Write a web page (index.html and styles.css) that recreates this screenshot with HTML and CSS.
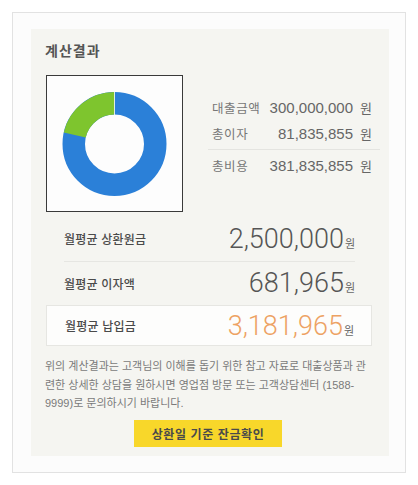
FILE: index.html
```html
<!DOCTYPE html>
<html lang="ko">
<head>
<meta charset="utf-8">
<link rel="stylesheet" href="styles.css">
</head>
<body>
<div class="outer">
  <div class="panel">
    <h2 class="title">계산결과</h2>
    <div class="top">
      <div class="chart">
        <svg width="135" height="135" viewBox="0 0 135 135">
          <circle cx="67.5" cy="68" r="40.75" fill="none" stroke="#2b80d8" stroke-width="22.5"/>
          <circle cx="67.5" cy="68" r="40.75" fill="none" stroke="#7ec52e" stroke-width="22.5" stroke-dasharray="54.88 300" transform="rotate(-167.1 67.5 68)"/>
          <line x1="67.5" y1="15" x2="67.5" y2="39" stroke="#ffffff" stroke-width="0.8"/>
        </svg>
      </div>
      <div class="info">
        <div class="irow"><span class="ilabel">대출금액</span><span class="ival">300,000,000</span><span class="iunit">원</span></div>
        <div class="irow sep"><span class="ilabel">총이자</span><span class="ival">81,835,855</span><span class="iunit">원</span></div>
        <div class="irow last"><span class="ilabel">총비용</span><span class="ival">381,835,855</span><span class="iunit">원</span></div>
      </div>
    </div>
    <div class="monthly">
      <div class="mrow first"><span class="mlabel">월평균 상환원금</span><span class="amount"><span class="mval">2,500,000</span><span class="munit">원</span></span></div>
      <div class="mrow second"><span class="mlabel">월평균 이자액</span><span class="amount"><span class="mval">681,965</span><span class="munit">원</span></span></div>
      <div class="mrow total"><span class="mlabel">월평균 납입금</span><span class="amount"><span class="mval orange">3,181,965</span><span class="munit">원</span></span></div>
    </div>
    <p class="note">위의 계산결과는 고객님의 이해를 돕기 위한 참고 자료로 대출상품과 관련한 상세한 상담을 원하시면 영업점 방문 또는 고객상담센터 (1588-<wbr>9999)로 문의하시기 바랍니다.</p>
    <div class="btnwrap"><button class="btn" type="button">상환일 기준 잔금확인</button></div>
  </div>
</div>
</body>
</html>
```
FILE: styles.css
```css
html, body {
  margin: 0;
  padding: 0;
  background: #ffffff;
}
body {
  font-family: "Liberation Sans", "Noto Sans CJK KR", sans-serif;
  color: #666;
}
.outer {
  margin: 12px 0 0 12px;
  width: 394px;
  height: 461px;
  box-sizing: border-box;
  border: 1px solid #e2e2e2;
  background: #fcfcfc;
  padding: 16px 16px 15px 18px;
}
.panel {
  background: #f5f5f1;
  height: 427px;
  box-sizing: border-box;
  padding: 12px 17px 0 15px;
}
.title {
  margin: 0 0 0 -1px;
  font-family: "Noto Sans CJK KR", sans-serif;
  font-size: 14px;
  font-weight: bold;
  letter-spacing: 1px;
  line-height: 18px;
  color: #555;
}
.top {
  display: flex;
  margin-top: 16px;
}
.chart {
  flex-shrink: 0;
  width: 137px;
  height: 137px;
  box-sizing: border-box;
  border: 1px solid #3a3a3a;
  background: #fdfdfd;
}
.chart svg {
  display: block;
}
.info {
  flex-shrink: 0;
  margin-left: 25px;
  margin-top: 20px;
  width: 176px;
  box-sizing: border-box;
  padding-right: 12px;
}
.irow {
  display: flex;
  align-items: baseline;
  height: 26px;
  line-height: 26px;
  padding-left: 4px;
  white-space: nowrap;
}
.irow.sep {
  padding-bottom: 2px;
  border-bottom: 1px solid #e4e4e0;
  margin-right: -8px;
  padding-right: 8px;
}
.irow.last {
  padding-top: 3px;
}
.ilabel {
  flex-shrink: 0;
  font-family: "Noto Sans CJK KR", sans-serif;
  font-size: 12.5px;
  letter-spacing: 0.6px;
  color: #777;
}
.ival {
  flex: 1 0 auto;
  text-align: right;
  font-size: 15px;
  color: #666;
}
.iunit {
  flex-shrink: 0;
  margin-left: 7px;
  font-family: "Noto Sans CJK KR", sans-serif;
  font-size: 13px;
  color: #666;
}
.monthly {
  display: flex;
  flex-direction: column;
}
.mrow {
  display: flex;
  align-items: center;
  justify-content: space-between;
  box-sizing: border-box;
  padding: 0 17px 0 18px;
}
.mrow.first,
.mrow.second {
  margin: 0 17px 0 18px;
  padding: 0;
}
.mrow.first {
  height: 50px;
  padding-top: 4px;
  border-bottom: 1px solid #e6e6e2;
}
.mrow.second {
  height: 42px;
}
.mrow.total {
  margin-top: 1px;
  height: 41px;
  border: 1px solid #e6e6e2;
  background: #fdfdfc;
}
.mlabel {
  font-family: "Noto Sans CJK KR", sans-serif;
  font-size: 12px;
  font-weight: 500;
  letter-spacing: 0.2px;
  color: #4a4a4a;
}
.amount {
  display: flex;
  align-items: baseline;
}
.mval {
  font-family: Roboto, sans-serif;
  font-weight: 300;
  font-size: 27px;
  line-height: 30px;
  color: #555;
}
.mval.orange {
  color: #eda263;
}
.munit {
  margin-left: 1px;
  font-family: "Noto Sans CJK KR", sans-serif;
  font-size: 11px;
  color: #666;
}
.note {
  margin: 11px 0 0 -1px;
  font-size: 11px;
  line-height: 18.5px;
  color: #7a7a7a;
}
.btnwrap {
  display: flex;
  justify-content: center;
  margin-top: 7px;
}
.btn {
  width: 148px;
  height: 27px;
  border: 0;
  padding: 0;
  background: #f8d72a;
  font-family: "Noto Sans CJK KR", sans-serif;
  font-size: 12px;
  font-weight: bold;
  letter-spacing: 0.6px;
  color: #4a4a4a;
  margin-left: -2px;
}
```
